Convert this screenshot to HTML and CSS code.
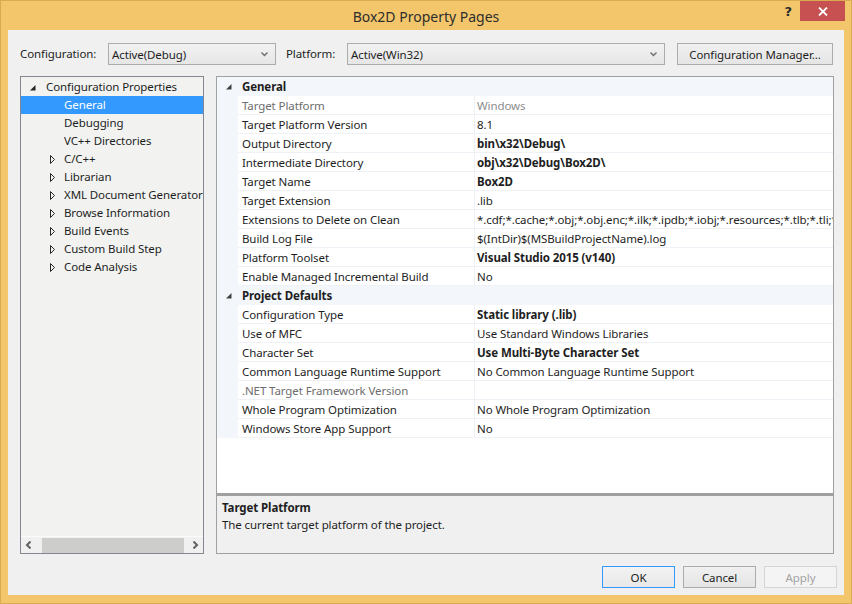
FILE: index.html
```html
<!DOCTYPE html>
<html lang="en">
<head>
<meta charset="utf-8">
<title>Box2D Property Pages</title>
<link rel="stylesheet" href="styles.css">
</head>
<body>
<div class="window">
  <div class="titlebar">
    <div class="tb-spacer"></div>
    <div class="title">Box2D Property Pages</div>
    <div class="controls">
      <span class="help">?</span>
      <span class="close"><svg width="10" height="9" viewBox="0 0 10 9"><path d="M1 0.5 L9 8.5 M9 0.5 L1 8.5" stroke="#fff" stroke-width="1.8" fill="none"/></svg></span>
    </div>
  </div>
  <div class="client">
    <div class="toolbar">
      <span class="lbl lbl-config">Configuration:</span>
      <div class="combo combo-config"><span>Active(Debug)</span><svg class="chev" width="7" height="5" viewBox="0 0 7 5"><path d="M0.5 0.5 L3.5 3.5 L6.5 0.5" stroke="#6d6d6d" stroke-width="1.4" fill="none"/></svg></div>
      <span class="lbl lbl-platform">Platform:</span>
      <div class="combo combo-platform"><span>Active(Win32)</span><svg class="chev" width="7" height="5" viewBox="0 0 7 5"><path d="M0.5 0.5 L3.5 3.5 L6.5 0.5" stroke="#6d6d6d" stroke-width="1.4" fill="none"/></svg></div>
      <div class="btn btn-cm">Configuration Manager...</div>
    </div>
    <div class="main">
      <div class="tree">
        <div class="tree-items">
          <div class="node root"><svg class="exp" width="6" height="6" viewBox="0 0 6 6"><path d="M5.5 0 L5.5 5.5 L0 5.5 Z" fill="#262626"/></svg><span>Configuration Properties</span></div>
          <div class="node child selected"><span>General</span></div>
          <div class="node child"><span>Debugging</span></div>
          <div class="node child"><span>VC++ Directories</span></div>
          <div class="node child"><svg class="col" width="5" height="9" viewBox="0 0 5 9"><path d="M0.5 0.5 L4.5 4.5 L0.5 8.5 Z" fill="none" stroke="#262626" stroke-width="1"/></svg><span>C/C++</span></div>
          <div class="node child"><svg class="col" width="5" height="9" viewBox="0 0 5 9"><path d="M0.5 0.5 L4.5 4.5 L0.5 8.5 Z" fill="none" stroke="#262626" stroke-width="1"/></svg><span>Librarian</span></div>
          <div class="node child"><svg class="col" width="5" height="9" viewBox="0 0 5 9"><path d="M0.5 0.5 L4.5 4.5 L0.5 8.5 Z" fill="none" stroke="#262626" stroke-width="1"/></svg><span>XML Document Generator</span></div>
          <div class="node child"><svg class="col" width="5" height="9" viewBox="0 0 5 9"><path d="M0.5 0.5 L4.5 4.5 L0.5 8.5 Z" fill="none" stroke="#262626" stroke-width="1"/></svg><span>Browse Information</span></div>
          <div class="node child"><svg class="col" width="5" height="9" viewBox="0 0 5 9"><path d="M0.5 0.5 L4.5 4.5 L0.5 8.5 Z" fill="none" stroke="#262626" stroke-width="1"/></svg><span>Build Events</span></div>
          <div class="node child"><svg class="col" width="5" height="9" viewBox="0 0 5 9"><path d="M0.5 0.5 L4.5 4.5 L0.5 8.5 Z" fill="none" stroke="#262626" stroke-width="1"/></svg><span>Custom Build Step</span></div>
          <div class="node child"><svg class="col" width="5" height="9" viewBox="0 0 5 9"><path d="M0.5 0.5 L4.5 4.5 L0.5 8.5 Z" fill="none" stroke="#262626" stroke-width="1"/></svg><span>Code Analysis</span></div>
        </div>
        <div class="hscroll">
          <svg class="arr" width="7" height="8" viewBox="0 0 7 8"><path d="M5.5 0.5 L2 4 L5.5 7.5" stroke="#606060" stroke-width="2" fill="none"/></svg>
          <div class="thumb"></div>
          <svg class="arr" width="7" height="8" viewBox="0 0 7 8"><path d="M1.5 0.5 L5 4 L1.5 7.5" stroke="#606060" stroke-width="2" fill="none"/></svg>
        </div>
      </div>
      <div class="right">
        <div class="grid">
          <div class="row cat"><span class="gutter"><svg width="6" height="6" viewBox="0 0 6 6"><path d="M5.5 0 L5.5 5.5 L0 5.5 Z" fill="#404040"/></svg></span><span class="cat-name">General</span></div>
          <div class="row dim"><span class="gutter"></span><span class="name">Target Platform</span><span class="val">Windows</span></div>
          <div class="row"><span class="gutter"></span><span class="name">Target Platform Version</span><span class="val">8.1</span></div>
          <div class="row"><span class="gutter"></span><span class="name">Output Directory</span><span class="val b">bin\x32\Debug\</span></div>
          <div class="row"><span class="gutter"></span><span class="name">Intermediate Directory</span><span class="val b">obj\x32\Debug\Box2D\</span></div>
          <div class="row"><span class="gutter"></span><span class="name">Target Name</span><span class="val b">Box2D</span></div>
          <div class="row"><span class="gutter"></span><span class="name">Target Extension</span><span class="val">.lib</span></div>
          <div class="row"><span class="gutter"></span><span class="name">Extensions to Delete on Clean</span><span class="val">*.cdf;*.cache;*.obj;*.obj.enc;*.ilk;*.ipdb;*.iobj;*.resources;*.tlb;*.tli;*.t</span></div>
          <div class="row"><span class="gutter"></span><span class="name">Build Log File</span><span class="val">$(IntDir)$(MSBuildProjectName).log</span></div>
          <div class="row"><span class="gutter"></span><span class="name">Platform Toolset</span><span class="val b">Visual Studio 2015 (v140)</span></div>
          <div class="row"><span class="gutter"></span><span class="name">Enable Managed Incremental Build</span><span class="val">No</span></div>
          <div class="row cat"><span class="gutter"><svg width="6" height="6" viewBox="0 0 6 6"><path d="M5.5 0 L5.5 5.5 L0 5.5 Z" fill="#404040"/></svg></span><span class="cat-name">Project Defaults</span></div>
          <div class="row"><span class="gutter"></span><span class="name">Configuration Type</span><span class="val b">Static library (.lib)</span></div>
          <div class="row"><span class="gutter"></span><span class="name">Use of MFC</span><span class="val">Use Standard Windows Libraries</span></div>
          <div class="row"><span class="gutter"></span><span class="name">Character Set</span><span class="val b">Use Multi-Byte Character Set</span></div>
          <div class="row"><span class="gutter"></span><span class="name">Common Language Runtime Support</span><span class="val">No Common Language Runtime Support</span></div>
          <div class="row dim"><span class="gutter"></span><span class="name">.NET Target Framework Version</span><span class="val"></span></div>
          <div class="row"><span class="gutter"></span><span class="name">Whole Program Optimization</span><span class="val">No Whole Program Optimization</span></div>
          <div class="row"><span class="gutter"></span><span class="name">Windows Store App Support</span><span class="val">No</span></div>
        </div>
        <div class="desc">
          <div class="desc-title">Target Platform</div>
          <div class="desc-text">The current target platform of the project.</div>
        </div>
      </div>
    </div>
    <div class="footer">
      <div class="btn btn-ok">OK</div>
      <div class="btn">Cancel</div>
      <div class="btn btn-disabled">Apply</div>
    </div>
  </div>
</div>
</body>
</html>
```

FILE: styles.css
```css
* { box-sizing: border-box; }
html, body { margin: 0; padding: 0; }
body {
  width: 852px;
  height: 604px;
  overflow: hidden;
  font-family: "Noto Sans", "Open Sans", sans-serif;
  font-size: 11.5px;
  letter-spacing: -0.1px;
  color: #1e1e1e;
}
.window {
  width: 852px;
  height: 604px;
  background: #f3c66b;
  border: 1px solid #d8ab50;
  display: flex;
  flex-direction: column;
}
.titlebar {
  height: 29px;
  display: grid;
  grid-template-columns: 1fr auto 1fr;
  align-items: start;
}
.title {
  font-size: 14px;
  letter-spacing: 0;
  color: #2d2d2d;
  line-height: 29px;
  padding-top: 1px;
}
.controls {
  display: flex;
  justify-content: flex-end;
  align-items: flex-start;
  padding-right: 6px;
}
.help {
  font-family: "DejaVu Sans", sans-serif;
  font-weight: bold;
  font-size: 13px;
  color: #2b2b2b;
  line-height: 20px;
  margin-right: 8px;
  padding-top: 1px;
}
.close {
  width: 45px;
  height: 20px;
  background: #c75050;
  display: flex;
  align-items: center;
  justify-content: center;
}
.client {
  margin: 0 7px;
  height: 565px;
  background: #f0f0f0;
  display: flex;
  flex-direction: column;
}
.toolbar {
  display: flex;
  align-items: center;
  height: 35px;
  padding: 13px 11px 0 12px;
}
.lbl { line-height: 22px; }
.lbl-config { width: 88px; }
.lbl-platform { width: 61px; margin-left: 10px; }
.combo {
  height: 22px;
  border: 1px solid #acacac;
  background: linear-gradient(#f2f2f2, #e6e6e6);
  display: flex;
  align-items: center;
  justify-content: space-between;
  padding: 0 7px 0 3px;
}
.combo-config { width: 168px; }
.combo-platform { width: 318px; }
.btn {
  height: 22px;
  border: 1px solid #acacac;
  background: linear-gradient(#f0f0f0, #e5e5e5);
  display: flex;
  align-items: center;
  justify-content: center;
  width: 73px;
}
.btn-cm { width: 156px; margin-left: 12px; }
.main {
  display: flex;
  margin-top: 11px;
  height: 478px;
  padding-left: 12px;
}
.tree {
  width: 184px;
  height: 478px;
  border: 1px solid #828790;
  background: #f2f3f1;
  display: flex;
  flex-direction: column;
}
.tree-items {
  flex: 1;
  padding-top: 1px;
  overflow: hidden;
}
.node {
  height: 18px;
  line-height: 18px;
  display: flex;
  align-items: center;
  white-space: nowrap;
}
.node svg { flex: none; }
.node.root { padding-left: 9px; }
.node.root .exp { margin-right: 10px; margin-top: 1px; }
.node.child { padding-left: 43px; }
.node.child .col { margin-left: -14px; margin-right: 9px; }
.node.selected { background: #3399ff; color: #fff; }
.hscroll {
  height: 17px;
  border-top: 1px solid #fbfbfb;
  background: #f0f0f0;
  display: flex;
  align-items: center;
  padding: 0 4px 0 4px;
}
.hscroll .arr { flex: none; }
.thumb {
  height: 15px;
  flex: 1;
  margin: 0 8px 0 10px;
  background: #cdcdcc;
}
.right {
  margin-left: 12px;
  width: 618px;
  display: flex;
  flex-direction: column;
}
.grid {
  height: 418px;
  border: 1px solid #a0a0a0;
  background: #fff;
  overflow: hidden;
}
.row {
  height: 19px;
  display: flex;
  white-space: nowrap;
}
.gutter {
  width: 21px;
  flex: none;
  background: #f3f6fa;
  display: flex;
  align-items: center;
  justify-content: center;
  padding-left: 2px;
}
.row.cat { background: #f3f6fa; }
.cat-name {
  font-weight: bold;
  line-height: 19px;
  padding-left: 4px;
}
.name {
  width: 237px;
  flex: none;
  height: 19px;
  padding-top: 1px;
  line-height: 17px;
  padding-left: 4px;
  border-bottom: 1px solid #eef1f5;
  border-right: 1px solid #eef1f5;
  overflow: hidden;
}
.val {
  flex: 1;
  height: 19px;
  padding-top: 1px;
  line-height: 17px;
  padding-left: 2px;
  border-bottom: 1px solid #eef1f5;
  overflow: hidden;
}
.b { font-weight: bold; }
.row.dim .name { color: #6d6d6d; }
.row.dim .val { color: #8d8d8d; }
.desc {
  height: 60px;
  border: 1px solid #a0a0a0;
  border-top: 2px solid #a0a0a0;
  background: #f0f0f0;
  padding: 3px 5px;
}
.desc-title { font-weight: bold; line-height: 17px; }
.desc-text { line-height: 17px; }
.footer {
  display: flex;
  justify-content: flex-end;
  gap: 8px;
  padding: 12px 7px 0 0;
}
.btn-ok { border-color: #3399ff; background: linear-gradient(#f2f2f2, #e8e8e8); }
.btn-disabled { border-color: #d5d5d5; background: #f4f4f4; color: #a3a3a3; }
```
